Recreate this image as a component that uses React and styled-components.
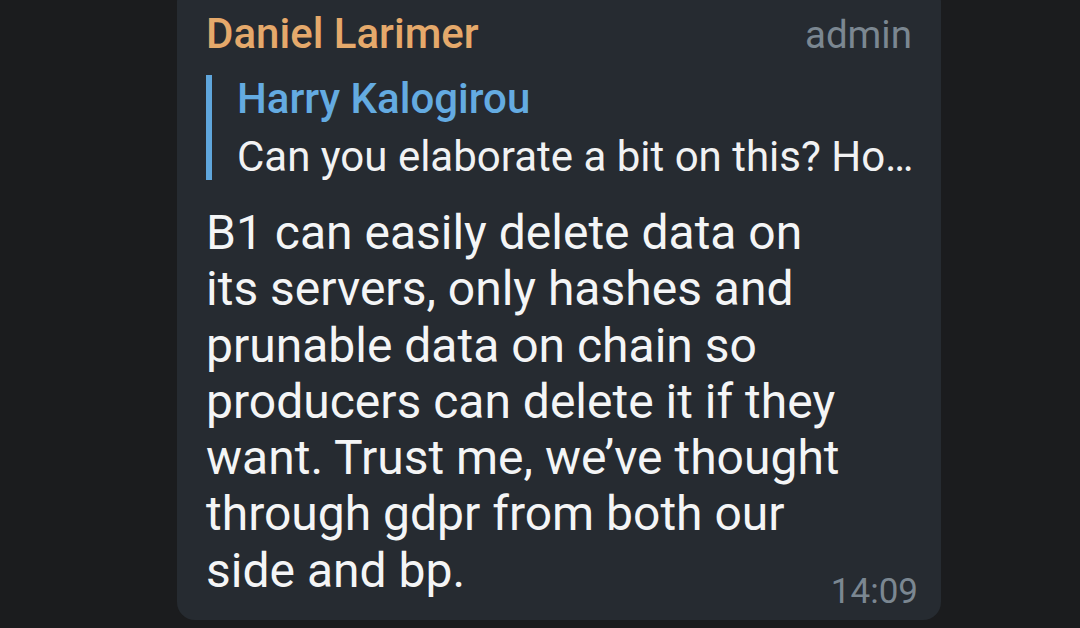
import React from 'react';
import styled, { createGlobalStyle } from 'styled-components';

const message = {
  author: 'Daniel Larimer',
  role: 'admin',
  reply: {
    author: 'Harry Kalogirou',
    text: 'Can you elaborate a bit on this? Ho…',
  },
  lines: [
    'B1 can easily delete data on',
    'its servers, only hashes and',
    'prunable data on chain so',
    'producers can delete it if they',
    'want. Trust me, we’ve thought',
    'through gdpr from both our',
    'side and bp.',
  ],
  time: '14:09',
};

const GlobalStyle = createGlobalStyle`
  html, body {
    margin: 0;
    padding: 0;
    background: #1b1c1e;
    font-family: Roboto, 'Noto Sans', sans-serif;
    -webkit-font-smoothing: antialiased;
  }
`;

const Page = styled.div`
  width: 1080px;
  height: 628px;
  overflow: hidden;
  background: #1b1c1e;
  padding-left: 177px;
  box-sizing: border-box;
`;

const Bubble = styled.div`
  width: 764px;
  margin-top: -16px;
  box-sizing: border-box;
  padding: 28px 29px 21px 29px;
  background: #262b31;
  border-radius: 18px;
  display: flex;
  flex-direction: column;
`;

const Header = styled.div`
  display: flex;
  justify-content: space-between;
  align-items: baseline;
  height: 44px;
  line-height: 44px;
`;

const Author = styled.span`
  font-size: 42px;
  font-weight: 500;
  color: #e5a96b;
`;

const Role = styled.span`
  font-size: 38.5px;
  color: #7b8791;
`;

const Reply = styled.div`
  margin-top: 19px;
  display: flex;
  flex-direction: column;
  border-left: 6px solid #5fa6dc;
  padding-left: 25px;
`;

const ReplyAuthor = styled.div`
  font-size: 42px;
  font-weight: 500;
  line-height: 47px;
  color: #64abe1;
`;

const ReplyText = styled.div`
  margin-top: 11px;
  font-size: 42px;
  line-height: 47px;
  color: #f1f2f3;
  white-space: nowrap;
`;

const BodyRow = styled.div`
  margin-top: 25px;
  display: flex;
  align-items: flex-end;
`;

const Body = styled.div`
  flex: 1;
  min-width: 0;
  font-size: 48px;
  line-height: 56.3px;
  color: #f4f5f6;
`;

const Line = styled.div`
  white-space: nowrap;
`;

const Time = styled.span`
  flex: none;
  font-size: 35px;
  line-height: 32px;
  color: #7b8791;
  margin-bottom: -9px;
  margin-right: -6px;
`;

export default function App() {
  return (
    <Page>
      <GlobalStyle />
      <Bubble>
        <Header>
          <Author>{message.author}</Author>
          <Role>{message.role}</Role>
        </Header>
        <Reply>
          <ReplyAuthor>{message.reply.author}</ReplyAuthor>
          <ReplyText>{message.reply.text}</ReplyText>
        </Reply>
        <BodyRow>
          <Body>
            {message.lines.map((l, i) => <Line key={i}>{l}</Line>)}
          </Body>
          <Time>{message.time}</Time>
        </BodyRow>
      </Bubble>
    </Page>
  );
}
